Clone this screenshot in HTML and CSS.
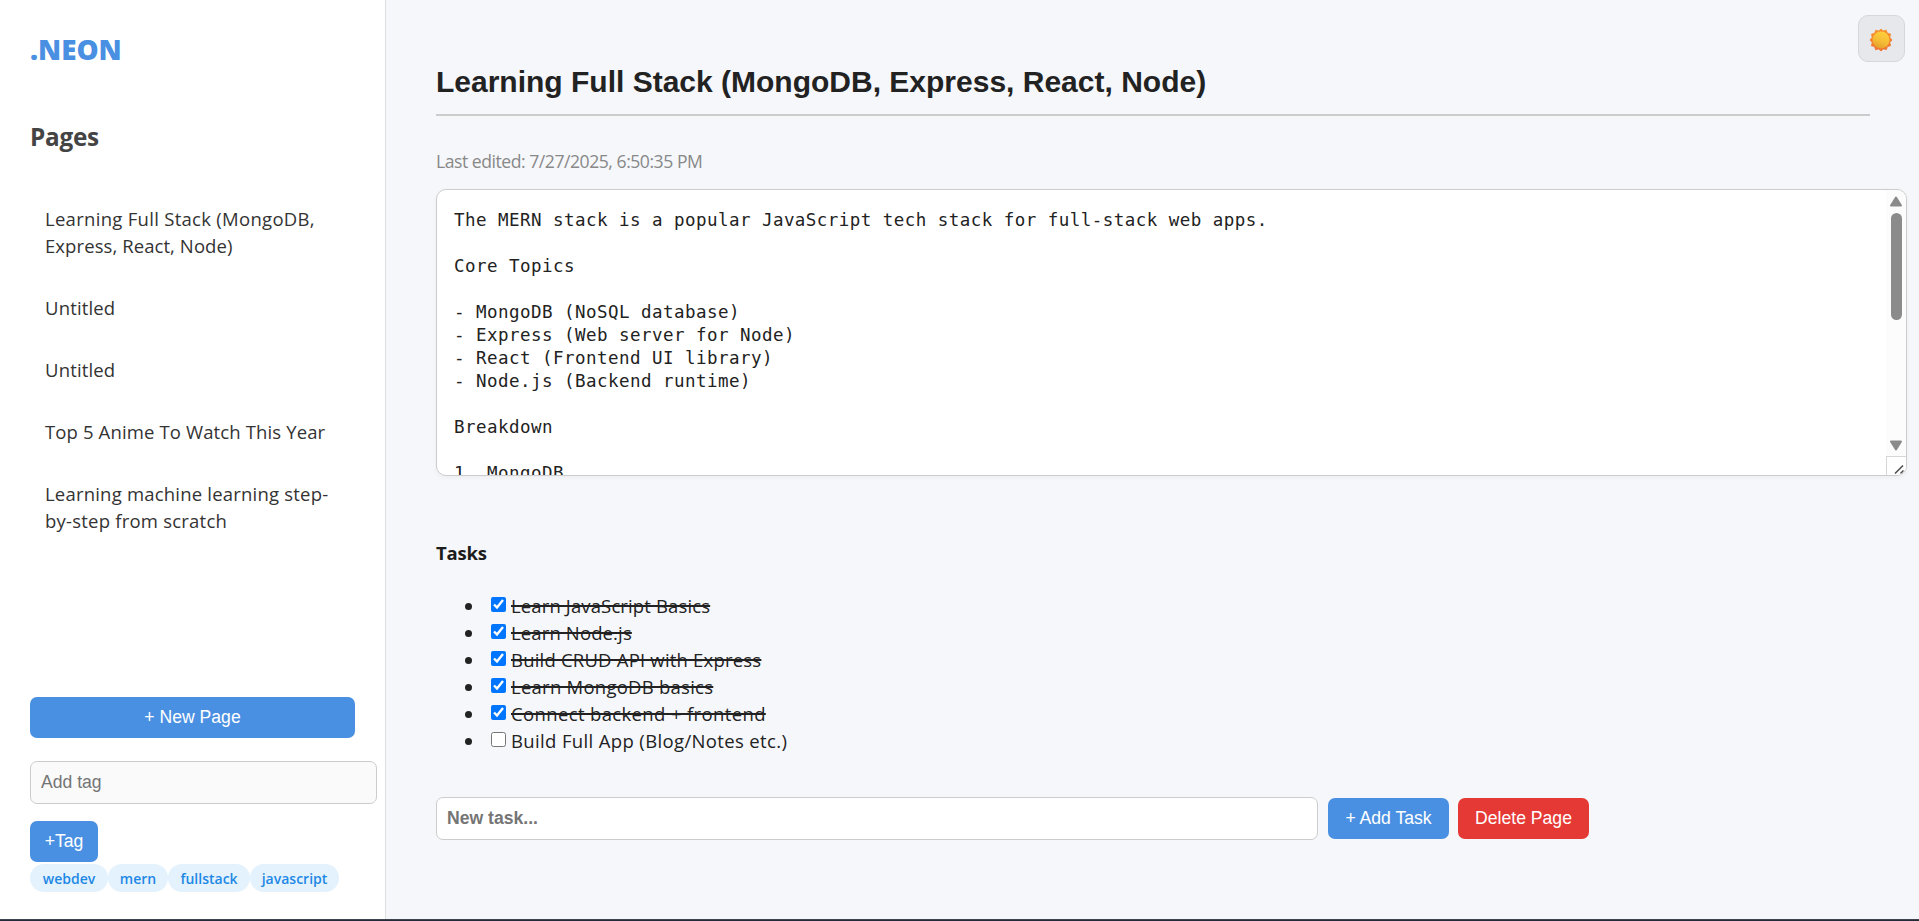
FILE: index.html
```html
<!DOCTYPE html>
<html lang="en">
<head>
<meta charset="utf-8">
<title>.NEON</title>
<link rel="stylesheet" href="styles.css">
</head>
<body>
<div class="app">
  <aside class="sidebar">
    <div class="logo"><span>.NEON</span></div>
    <h2 class="pages-title"><span>Pages</span></h2>
    <ul class="pages">
      <li><span class="p1">Learning Full Stack (MongoDB,</span><br><span class="p2">Express, React, Node)</span></li>
      <li><span class="p3">Untitled</span></li>
      <li><span class="p3">Untitled</span></li>
      <li><span class="p4">Top 5 Anime To Watch This Year</span></li>
      <li><span class="p5">Learning machine learning step-</span><br><span class="p6">by-step from scratch</span></li>
    </ul>
    <div class="sidebar-foot">
      <button class="btn new-page"><span>+ New Page</span></button>
      <input class="tag-input" placeholder="Add tag">
      <button class="btn add-tag"><span>+Tag</span></button>
      <div class="tags"><span class="tag t1">webdev</span><span class="tag t2">mern</span><span class="tag t3">fullstack</span><span class="tag t4">javascript</span></div>
    </div>
  </aside>
  <main class="main">
    <h1 class="title"><span>Learning Full Stack (MongoDB, Express, React, Node)</span></h1>
    <p class="edited"><span>Last edited: 7/27/2025, 6:50:35 PM</span></p>
    <div class="editor">
      <pre class="note">The MERN stack is a popular JavaScript tech stack for full-stack web apps.

Core Topics

- MongoDB (NoSQL database)
- Express (Web server for Node)
- React (Frontend UI library)
- Node.js (Backend runtime)

Breakdown

1. MongoDB</pre>
      <div class="scrollbar">
        <svg class="up" width="14" height="11" viewBox="0 0 14 11"><path d="M7 1.5 12 9.5H2Z" fill="#8b8b8b" stroke="#8b8b8b" stroke-width="2" stroke-linejoin="round"/></svg>
        <div class="thumb"></div>
        <svg class="down" width="14" height="11" viewBox="0 0 14 11"><path d="M7 9.5 12 1.5H2Z" fill="#8b8b8b" stroke="#8b8b8b" stroke-width="2" stroke-linejoin="round"/></svg>
        <div class="corner"><svg width="18" height="18" viewBox="0 0 18 18"><path d="M8 16.5 16 8.5M13.5 16.5 16.5 13.5" stroke="#4a4a4a" stroke-width="1.5"/></svg></div>
      </div>
    </div>
    <h3 class="tasks-title"><span>Tasks</span></h3>
    <ul class="tasks">
      <li class="done"><input type="checkbox" checked><span class="k1">Learn JavaScript Basics</span></li>
      <li class="done"><input type="checkbox" checked><span class="k2">Learn Node.js</span></li>
      <li class="done"><input type="checkbox" checked><span class="k3">Build CRUD API with Express</span></li>
      <li class="done"><input type="checkbox" checked><span class="k4">Learn MongoDB basics</span></li>
      <li class="done"><input type="checkbox" checked><span class="k5">Connect backend + frontend</span></li>
      <li><input type="checkbox"><span class="k6">Build Full App (Blog/Notes etc.)</span></li>
    </ul>
    <div class="actions">
      <input class="task-input" placeholder="New task...">
      <button class="btn add-task"><span>+ Add Task</span></button>
      <button class="btn delete"><span>Delete Page</span></button>
    </div>
  </main>
</div>
<button class="theme" aria-label="Toggle theme">
  <svg width="24" height="24" viewBox="0 0 24 24">
    <defs>
      <linearGradient id="rays" x1="0" y1="0" x2="0" y2="1"><stop offset="0" stop-color="#f9932f"/><stop offset="1" stop-color="#f0702f"/></linearGradient>
      <linearGradient id="disc" x1=".7" y1="0" x2=".3" y2="1"><stop offset="0" stop-color="#ffcf3d"/><stop offset=".55" stop-color="#f5bd36"/><stop offset="1" stop-color="#e39c2c"/></linearGradient>
    </defs>
    <path d="M12 1 14.1 2.9 17.3 2.1 18.2 5.1 21.6 6 20.8 9.2 23 12 20.8 14.5 21.6 17.8 18.4 18.6 17.5 21.6 14.3 21 12 23 9.6 21 6.5 21.7 5.6 18.6 2.4 17.8 3.2 14.6 1 12 3.2 9.3 2.4 6.2 5.6 5.2 6.6 2.2 9.8 2.9Z" fill="url(#rays)" stroke="url(#rays)" stroke-width=".8" stroke-linejoin="round"/>
    <circle cx="12" cy="12" r="8.5" fill="url(#disc)"/>
  </svg>
</button>
<div class="bottom-edge"></div>
</body>
</html>
```
FILE: styles.css
```css
* { box-sizing: border-box; }
body {
  margin: 0;
  width: 1919px;
  height: 921px;
  overflow: hidden;
  background: #f5f7fb;
  color: #222;
  font: 18.5px/27px "Open Sans", "Noto Sans", sans-serif;
}
h1, h2, h3, p, ul, pre { margin: 0; padding: 0; }
.app { display: flex; height: 921px; }
.sidebar {
  width: 386px;
  flex: none;
  display: flex;
  flex-direction: column;
  background: #fff;
  border-right: 1px solid #dcdedf;
  padding: 29px 30px;
}
.logo { height: 40px; font-size: 27.8px; line-height: 40px; font-weight: 800; color: #4a90e2; }
.pages-title { margin-top: 48px; height: 40px; font-size: 24.3px; line-height: 40px; letter-spacing: -.25px; font-weight: 700; color: #444; }
.pages { list-style: none; margin-top: 48px; color: #333; white-space: nowrap; }
.pages li { padding: 0 15px; margin-bottom: 35px; }
.p1 { letter-spacing: .29px; }
.p2 { letter-spacing: .08px; }
.p3 { letter-spacing: .15px; }
.p4 { letter-spacing: .13px; }
.p5 { letter-spacing: .2px; }
.p6 { letter-spacing: .22px; }
.sidebar-foot { margin-top: auto; display: flex; flex-direction: column; align-items: flex-start; }
.btn {
  height: 41px;
  border: 0;
  border-radius: 7px;
  padding: 0;
  background: #4a90e2;
  color: #fff;
  font: 17.6px/41px "Liberation Sans", Arial, sans-serif;
  white-space: nowrap;
}
.new-page { width: 325px; }
input[placeholder] {
  height: 43px;
  border: 1px solid #ccc;
  border-radius: 7px;
  padding: 0 10px;
  outline: 0;
  font: 17.6px "Liberation Sans", Arial, sans-serif;
}
input::placeholder { color: #757575; opacity: 1; }
.tag-input { width: 347px; margin: 23px 0 17px; background: #fafafa; }
.add-tag { width: 68px; }
.tags { display: flex; margin-top: 2px; }
.tag {
  height: 28px;
  border-radius: 14px;
  background: #e3f2fd;
  color: #1e88e5;
  font-size: 14px;
  line-height: 29px;
  font-weight: 600;
  text-align: center;
}
.t1 { width: 78px; }
.t2 { width: 60px; }
.t3 { width: 82px; }
.t4 { width: 89px; }
.main { flex: 1; padding: 60px 0 0 50px; }
.title {
  width: 1434px;
  height: 56px;
  border-bottom: 2px solid #ccc;
  font: bold 30px/43px "Liberation Sans", Arial, sans-serif;
}
.edited { margin-top: 32px; height: 27px; font-size: 17.6px; letter-spacing: -.47px; color: #888; }
.editor {
  display: flex;
  margin-top: 14px;
  width: 1471px;
  height: 287px;
  border: 1px solid #ccc;
  border-radius: 10px;
  background: #fff;
  overflow: hidden;
  box-shadow: 0 2px 5px rgba(0, 0, 0, .04);
}
.note {
  flex: 1;
  padding: 19px 17px 0;
  font: 17.5px/23px "DejaVu Sans Mono", monospace;
  letter-spacing: .46px;
}
.scrollbar {
  width: 20px;
  display: flex;
  flex-direction: column;
  align-items: center;
  background: #fcfcfc;
  padding-top: 6px;
}
.thumb { width: 11px; height: 107px; margin-top: 6px; border-radius: 6px; background: #8b8b8b; }
.down { margin-top: auto; }
.corner { width: 20px; height: 19px; margin-top: 5px; border: solid #d6d6d6; border-width: 1px 0 0 1px; background: #fff; }
.corner svg { display: block; }
.tasks-title { margin-top: 63px; height: 27px; font-size: 18.5px; letter-spacing: -.2px; font-weight: 700; color: #1c1c1c; }
.tasks { list-style: none; margin-top: 26px; }
.tasks li { display: flex; height: 27px; padding-left: 29px; white-space: nowrap; }
.tasks li::before { content: ""; width: 7px; height: 7px; margin: 11px 19px 0 0; border-radius: 50%; background: #222; }
.tasks input { width: 15px; height: 15px; margin: 5px 5px 0 0; }
.done span { text-decoration: line-through; text-decoration-thickness: 2px; }
.k1, .k2 { letter-spacing: .13px; }
.k3 { letter-spacing: .2px; }
.k4 { letter-spacing: .25px; }
.k5, .k6 { letter-spacing: .36px; }
.actions { display: flex; align-items: center; margin-top: 43px; }
.actions .task-input { width: 882px; font-weight: bold; }
.add-task { width: 121px; margin-left: 10px; }
.delete { width: 131px; margin-left: 9px; background: #e53935; }
.theme {
  position: absolute;
  left: 1858px;
  top: 15px;
  width: 47px;
  height: 47px;
  padding: 0 1px 0 0;
  display: grid;
  place-items: center;
  border: 1px solid #d5d7da;
  border-radius: 10px;
  background: #e6e8eb;
}
.theme svg { margin-top: 3px; }
.bottom-edge { position: absolute; left: 0; top: 919px; width: 1919px; height: 2px; background: #232a3a; border-top: 1px solid #3f434d; }
```
